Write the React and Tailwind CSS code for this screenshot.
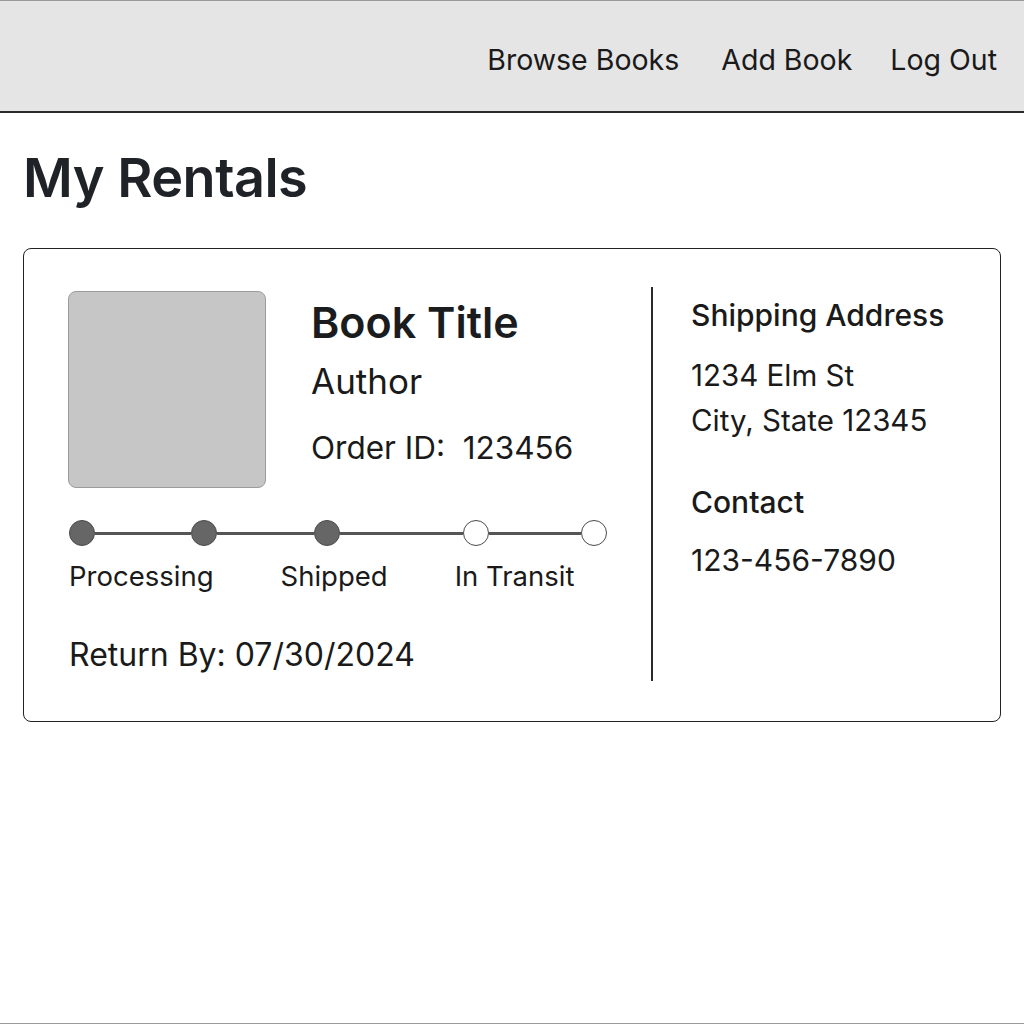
export default function App() {
  return (
    <div
      className="h-[1024px] bg-white border-y border-[#9a9a9a] text-[#1c1e21] flex flex-col"
      style={{ fontFamily: "Inter, 'Noto Sans', sans-serif" }}
    >
      <header className="h-[112px] shrink-0 bg-[#e5e5e5] border-b-2 border-[#2a2a2a] flex items-center justify-end pr-[27px] pt-[8px]">
        <nav className="flex items-center text-[28.5px] leading-[36px] text-[#1a1a1a]">
          <a className="mr-[42px]">Browse Books</a>
          <a className="mr-[38px]">Add Book</a>
          <a>Log Out</a>
        </nav>
      </header>

      <main className="px-[23px]">
        <h1 className="mt-[33px] text-[54px] leading-[64px] font-semibold tracking-[-0.5px] text-[#1f2327]">
          My Rentals
        </h1>

        <section className="mt-[38px] w-[978px] h-[474px] border border-[#222] rounded-[8px] flex py-[38px]">
          <div className="w-[627px] pl-[44px] pt-[4px] flex flex-col">
            <div className="flex">
              <div className="w-[198px] h-[197px] bg-[#c6c6c6] border border-[#9c9c9c] rounded-[8px]" />
              <div className="ml-[45px] pt-[7px]">
                <h2 className="text-[43px] leading-[48px] font-semibold text-[#1a1c1e]">Book Title</h2>
                <p className="mt-[15px] text-[35px] leading-[40px] text-[#1a1a1a]">Author</p>
                <p className="mt-[27px] text-[31.5px] leading-[40px] text-[#1a1a1a]">Order ID:&nbsp; 123456</p>
              </div>
            </div>

            <div className="mt-[32px] ml-[1px] flex items-center">
              <Dot filled />
              <Seg w="w-[96px]" />
              <Dot filled />
              <Seg w="w-[97px]" />
              <Dot filled />
              <Seg w="w-[123px]" />
              <Dot />
              <Seg w="w-[92px]" />
              <Dot />
            </div>

            <div className="mt-[14px] ml-[1px] flex gap-[67px] text-[27.5px] leading-[32px] text-[#1a1a1a]">
              <span>Processing</span>
              <span>Shipped</span>
              <span>In Transit</span>
            </div>

            <p className="mt-[45px] pl-[1px] text-[32px] leading-[36px] text-[#1a1a1a]">
              Return By: 07/30/2024
            </p>
          </div>

          <div className="w-[2px] h-[394px] bg-[#2a2a2a]" />

          <div className="pl-[38px] pt-[10px] text-[#1a1a1a]">
            <h3 className="text-[30px] leading-[36px] font-medium">Shipping Address</h3>
            <div className="mt-[20px] text-[29.5px] leading-[45px]">
              <p>1234 Elm St</p>
              <p>City, State 12345</p>
            </div>
            <h3 className="mt-[41px] text-[30px] leading-[36px] font-medium">Contact</h3>
            <p className="mt-[22px] text-[30px] leading-[36px]">123-456-7890</p>
          </div>
        </section>
      </main>
    </div>
  );
}

function Dot({ filled }) {
  return (
    <span
      className={`block w-[26px] h-[26px] rounded-full border-[1.5px] border-[#4a4a4a] shrink-0 ${
        filled ? "bg-[#666666]" : "bg-white"
      }`}
    />
  );
}

function Seg({ w }) {
  return <span className={`block h-[3px] bg-[#555555] ${w}`} />;
}
